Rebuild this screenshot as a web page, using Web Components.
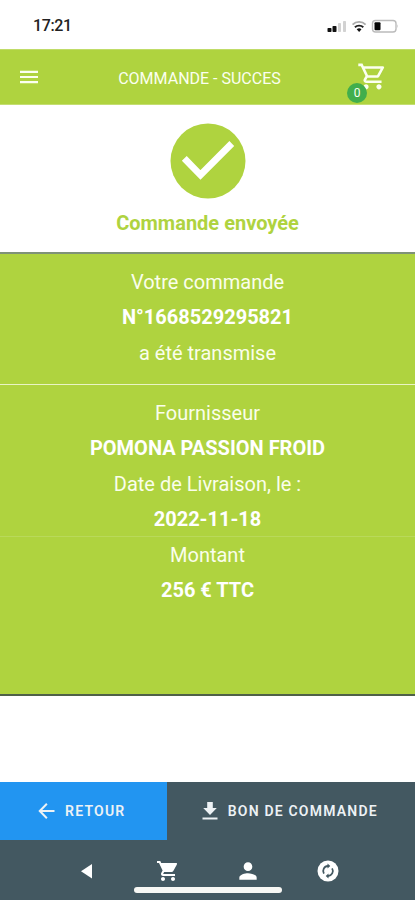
<!DOCTYPE html>
<html lang="fr">
<head>
<meta charset="utf-8">
<title>Commande - Succès</title>
<style>
html, body { margin: 0; height: 100%; overflow: hidden; background: #fff; font-family: Roboto, "Liberation Sans", sans-serif; }
</style>
</head>
<body>
<order-screen></order-screen>
<script>
const define = (name, html) => customElements.define(name, class extends HTMLElement {
  constructor() {
    super();
    this.attachShadow({ mode: "open" }).innerHTML = html;
  }
});

define("status-bar", `
<style>
:host { display: flex; justify-content: space-between; align-items: center; height: 49px; box-sizing: border-box; padding: 3px 16px 0 33px; color: #222; font: 500 16px Roboto, sans-serif; }
span { letter-spacing: -.4px; margin-top: -1px; }
svg { display: block; }
</style>
<span>17:21</span>
<svg width="72" height="16" viewBox="327 17 72 16">
  <g fill="#111"><rect x="327.5" y="27" width="4" height="4" rx=".8"/><rect x="332.5" y="25" width="4" height="6" rx=".8"/></g>
  <g fill="#d2d2d2"><rect x="338" y="22" width="3" height="9" rx=".8"/><rect x="343" y="20" width="3" height="11" rx=".8"/></g>
  <g fill="none" stroke-width="1.9"><path d="M352.6 23.6a9.2 9.2 0 0 1 13 0" stroke="#aaa"/><path d="M354.9 26.3a6 6 0 0 1 8.4 0" stroke="#222"/></g>
  <path d="M356.7 28.3a3.5 3.5 0 0 1 4.8 0l-2.4 2.7z" fill="#111"/>
  <rect x="372.5" y="19.5" width="23.5" height="11.5" rx="3" fill="#fff" stroke="#bbb" stroke-width="1.4"/>
  <rect x="374.5" y="21.3" width="6" height="8" rx="1" fill="#050505"/>
  <path d="M397 23.3q1.6 2 0 4z" fill="#bbb"/>
</svg>`);

define("app-header", `
<style>
:host { display: grid; grid-template-columns: 57px 1fr 72px; align-items: center; height: 56px; box-sizing: border-box; background: #afd33f; color: #fbfff0; border-bottom: 1px solid #c4de72; border-top: 1px solid #c0dc68; }
h1 { margin: 3px 1px 0 0; font-size: 16px; font-weight: 400; text-align: center; white-space: nowrap; }
.menu { margin-left: 16.5px; }
.cart { position: relative; height: 54px; }
.cart svg { position: absolute; left: 14px; top: 10.5px; }
.badge { position: absolute; left: 4px; top: 33px; width: 20px; height: 20px; border-radius: 50%; background: #41ae4c; font-size: 12px; line-height: 20px; text-align: center; }
</style>
<svg class="menu" width="24" height="24" viewBox="0 0 24 24" fill="currentColor"><path d="M3 5.8h18V8H3zM3 10.9h18v2.2H3zM3 16h18v2.2H3z"/></svg>
<h1>COMMANDE - SUCCES</h1>
<div class="cart">
  <svg width="31" height="31" viewBox="0 0 24 24" fill="currentColor"><path d="M15.55 13c.75 0 1.41-.41 1.75-1.03l3.58-6.49A.996.996 0 0 0 20.01 4H5.21l-.94-2H1v2h2l3.6 7.59-1.35 2.44C4.52 15.37 5.48 17 7 17h12v-2H7l1.1-2h7.45zM6.16 6h12.15l-2.76 5H8.53L6.16 6zM7 18c-1.1 0-1.99.9-1.99 2S5.9 22 7 22s2-.9 2-2-.9-2-2-2zm10 0c-1.1 0-1.99.9-1.99 2s.89 2 1.99 2 2-.9 2-2-.9-2-2-2z"/></svg>
  <span class="badge">0</span>
</div>`);

define("success-banner", `
<style>
:host { display: flex; flex-direction: column; align-items: center; height: 147px; box-sizing: border-box; padding-top: 18px; color: #afd33f; font-size: 20px; font-weight: 700; }
svg { display: block; margin-bottom: 12px; }
</style>
<svg width="76" height="76" viewBox="170 123 76 76"><circle cx="208" cy="161" r="37.5" fill="currentColor"/><path d="M184.3 158.4l16.2 16.6 31.3-31.5" fill="none" stroke="#fff" stroke-width="6.8"/></svg>
<slot></slot>`);

define("info-line", `
<style>
:host { display: flex; justify-content: center; align-items: center; height: 35.5px; font-size: 20px; color: #fafeeb; white-space: nowrap; }
:host([strong]) { font-weight: 700; color: #fff; }
:host([rule]) { border-bottom: 1px solid #b9d95a; box-sizing: border-box; }
</style><span><slot></slot></span>`);

define("order-summary", `
<style>
:host { display: block; height: 444px; box-sizing: border-box; background: #afd33f; border-top: 2px solid #7f9277; border-bottom: 2px solid #4e6048; }
.sent { height: 131px; box-sizing: border-box; padding-top: 10px; border-bottom: 1px solid #e9f4c4; }
.details { padding-top: 10px; }
</style>
<div class="sent"><slot name="sent"></slot></div>
<div class="details"><slot></slot></div>`);

define("action-button", `
<style>
:host { display: flex; align-items: center; justify-content: center; gap: 8px; height: 58px; padding-right: 4.5px; font-size: 14px; font-weight: 600; color: #edf2f5; white-space: nowrap; letter-spacing: 1.2px; box-sizing: border-box; }
</style><slot name="icon"></slot><span><slot></slot></span>`);

define("bottom-nav", `
<style>
:host { display: flex; flex-direction: column; align-items: center; height: 60px; background: #435861; color: #fff; }
.icons { display: grid; grid-template-columns: repeat(4, 80.5px); justify-items: center; align-items: center; height: 61px; margin-bottom: -14px; }
svg { display: block; }
.trolley { margin-left: 1.5px; }
.bar { width: 148px; height: 6px; border-radius: 3px; background: #f7f7f4; }
</style>
<div class="icons">
<svg width="24" height="24" viewBox="0 0 24 24" fill="currentColor"><path d="M6 12.2L17 5v14.5z"/></svg>
<svg class="trolley" width="24" height="24" viewBox="0 0 24 24" fill="currentColor"><path d="M7 18c-1.1 0-1.99.9-1.99 2S5.9 22 7 22s2-.9 2-2-.9-2-2-2zM1 2v2h2l3.6 7.59-1.35 2.45c-.16.28-.25.61-.25.96 0 1.1.9 2 2 2h12v-2H7.42c-.14 0-.25-.11-.25-.25l.03-.12.9-1.63h7.45c.75 0 1.41-.41 1.75-1.03l3.58-6.49A1 1 0 0 0 20 4H5.21l-.94-2H1zm16 16c-1.1 0-1.99.9-1.99 2s.89 2 1.99 2 2-.9 2-2-.9-2-2-2z"/></svg>
<svg width="26" height="26" viewBox="0 0 24 24" fill="currentColor"><path d="M12 12c2.21 0 4-1.79 4-4s-1.79-4-4-4-4 1.79-4 4 1.79 4 4 4zm0 2c-2.67 0-8 1.34-8 4v2h16v-2c0-2.66-5.33-4-8-4z"/></svg>
<svg width="24" height="24" viewBox="0 0 24 24"><circle cx="12" cy="12" r="10.5" fill="currentColor"/><g fill="none" stroke="#435861" stroke-width="1.8"><path d="M7.9 14.6A5 5 0 0 1 12 7M16.1 9.4A5 5 0 0 1 12 17"/></g><path d="M11.5 4.4v5.2L14.3 7zM12.5 19.6v-5.2L9.7 17z" fill="#435861"/></svg>
</div>
<div class="bar"></div>`);

define("order-screen", `
<style>
:host { display: flex; flex-direction: column; width: 415px; height: 900px; }
.space { flex: 1; }
.actions { display: grid; grid-template-columns: 167px 1fr; background: #435861; }
.back { background: #2295f1; }
</style>
<status-bar></status-bar>
<app-header></app-header>
<success-banner>Commande envoyée</success-banner>
<order-summary>
  <info-line slot="sent">Votre commande</info-line>
  <info-line slot="sent" strong>N°1668529295821</info-line>
  <info-line slot="sent">a été transmise</info-line>
  <info-line>Fournisseur</info-line>
  <info-line strong>POMONA PASSION FROID</info-line>
  <info-line>Date de Livraison, le :</info-line>
  <info-line strong rule>2022-11-18</info-line>
  <info-line>Montant</info-line>
  <info-line strong>256 € TTC</info-line>
</order-summary>
<div class="space"></div>
<div class="actions">
  <action-button class="back"><svg slot="icon" width="20" height="20" viewBox="0 0 24 24" fill="currentColor"><path d="M21 10.7H6.3l6.4-6.5L11 2.5 1.6 12 11 21.5l1.7-1.7-6.4-6.5H21z"/></svg>RETOUR</action-button>
  <action-button><svg slot="icon" width="20" height="20" viewBox="0 0 20 20" fill="currentColor"><path d="M7.2 1h5.6v6h4L10 14 3.2 7h4zM2.5 16.5h15v2h-15z"/></svg>BON DE COMMANDE</action-button>
</div>
<bottom-nav></bottom-nav>`);
</script>
</body>
</html>
